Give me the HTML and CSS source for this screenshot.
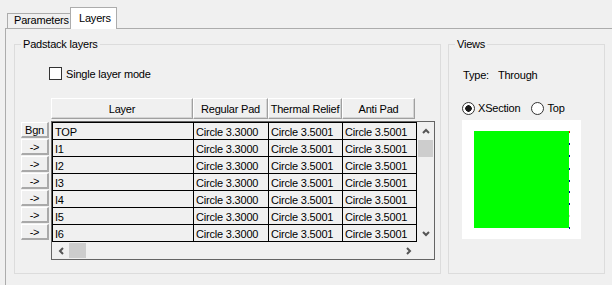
FILE: index.html
```html
<!DOCTYPE html>
<html lang="en">
<head>
    <meta charset="UTF-8">
    <title>Padstack - Layers</title>
    <link rel="stylesheet" href="styles.css">
</head>
<body>
    <div class="tabs">
        <div class="tab">Parameters</div>
        <div class="tab active">Layers</div>
    </div>

    <div class="panel">
        <fieldset class="group layers-group">
            <legend>Padstack layers</legend>

            <label class="check"><span class="check-box"></span>Single layer mode</label>

            <div class="table-area">
                <div class="row-buttons">
                    <div class="small-btn">Bgn</div>
                    <div class="small-btn">-&gt;</div>
                    <div class="small-btn">-&gt;</div>
                    <div class="small-btn">-&gt;</div>
                    <div class="small-btn">-&gt;</div>
                    <div class="small-btn">-&gt;</div>
                    <div class="small-btn">-&gt;</div>
                </div>

                <div class="grid">
                    <div class="grid-head">
                        <div class="head-cell col-layer">Layer</div>
                        <div class="head-cell col-regular">Regular Pad</div>
                        <div class="head-cell col-thermal">Thermal Relief</div>
                        <div class="head-cell col-anti">Anti Pad</div>
                    </div>

                    <div class="grid-body">
                        <div class="rows">
                            <div class="cell">TOP</div><div class="cell">Circle 3.3000</div><div class="cell">Circle 3.5001</div><div class="cell">Circle 3.5001</div>
                            <div class="cell">I1</div><div class="cell">Circle 3.3000</div><div class="cell">Circle 3.5001</div><div class="cell">Circle 3.5001</div>
                            <div class="cell">I2</div><div class="cell">Circle 3.3000</div><div class="cell">Circle 3.5001</div><div class="cell">Circle 3.5001</div>
                            <div class="cell">I3</div><div class="cell">Circle 3.3000</div><div class="cell">Circle 3.5001</div><div class="cell">Circle 3.5001</div>
                            <div class="cell">I4</div><div class="cell">Circle 3.3000</div><div class="cell">Circle 3.5001</div><div class="cell">Circle 3.5001</div>
                            <div class="cell">I5</div><div class="cell">Circle 3.3000</div><div class="cell">Circle 3.5001</div><div class="cell">Circle 3.5001</div>
                            <div class="cell">I6</div><div class="cell">Circle 3.3000</div><div class="cell">Circle 3.5001</div><div class="cell">Circle 3.5001</div>
                        </div>

                        <div class="vscroll">
                            <div class="arrow">
                                <svg width="8" height="6" viewBox="0 0 8 6"><polyline points="1,5 4,2 7,5" /></svg>
                            </div>
                            <div class="vthumb"></div>
                            <div class="arrow arrow-end">
                                <svg width="8" height="6" viewBox="0 0 8 6"><polyline points="1,1 4,4 7,1" /></svg>
                            </div>
                        </div>

                        <div class="hscroll">
                            <div class="arrow">
                                <svg width="6" height="8" viewBox="0 0 6 8"><polyline points="5,1 2,4 5,7" /></svg>
                            </div>
                            <div class="hthumb"></div>
                            <div class="arrow arrow-end">
                                <svg width="6" height="8" viewBox="0 0 6 8"><polyline points="1,1 4,4 1,7" /></svg>
                            </div>
                        </div>

                        <div class="corner"></div>
                    </div>
                </div>
            </div>
        </fieldset>

        <fieldset class="group views-group">
            <legend>Views</legend>

            <div class="type-line"><span class="type-label">Type:</span>Through</div>

            <div class="radio-line">
                <label class="radio"><span class="radio-dot checked"></span>XSection</label>
                <label class="radio"><span class="radio-dot"></span>Top</label>
            </div>

            <div class="preview">
                <svg width="119" height="119" viewBox="0 0 119 119">
                    <rect x="12" y="11" width="95" height="97" fill="#00ff00" />
                    <rect x="107" y="11" width="1" height="2" fill="#ff0000" />
                    <rect x="107" y="23" width="1" height="2" fill="#0000a8" />
                    <rect x="107" y="35" width="1" height="2" fill="#0000a8" />
                    <rect x="107" y="48" width="1" height="2" fill="#0000a8" />
                    <rect x="107" y="60" width="1" height="2" fill="#0000a8" />
                    <rect x="107" y="71" width="1" height="2" fill="#0000a8" />
                    <rect x="107" y="83" width="1" height="2" fill="#0000a8" />
                    <rect x="107" y="95" width="1" height="2" fill="#c8c8c8" />
                    <rect x="107" y="107" width="1" height="2" fill="#0000a8" />
                </svg>
            </div>
        </fieldset>
    </div>
</body>
</html>
```

FILE: styles.css
```css
* {
    box-sizing: border-box;
}
html, body {
    margin: 0;
    height: 100%;
    overflow: hidden;
}
body {
    font-family: "Liberation Sans", Arial, sans-serif;
    font-size: 11px;
    letter-spacing: -0.2px;
    color: #000000;
    background-color: #f0f0f0;
}

/* tab strip */
.tabs {
    display: flex;
    align-items: flex-end;
    padding: 7px 0 0 7px;
}
.tab {
    width: 64px;
    height: 15px;
    padding-left: 6px;
    line-height: 13px;
    white-space: nowrap;
    border: 1px solid #acacac;
    border-bottom: none;
}
.tab.active {
    position: relative;
    z-index: 1;
    width: 47px;
    height: 22px;
    margin-left: -1px;
    margin-bottom: -1px;
    padding-left: 8px;
    line-height: 20px;
    background-color: #ffffff;
}
.panel {
    display: flex;
    align-items: flex-start;
    gap: 7px;
    width: 620px;
    height: 270px;
    margin-left: 5px;
    padding: 9px 0 0 8px;
    border: 1px solid #acacac;
}

/* group boxes */
.group {
    margin: 0;
    padding: 0;
    min-width: 0;
    height: 236px;
    border: 1px solid #dcdcdc;
}
.group legend {
    margin-left: 6px;
    padding: 0 2px;
    line-height: 13px;
}
.layers-group {
    width: 427px;
}
.views-group {
    width: 157px;
}

.check {
    display: flex;
    align-items: center;
    height: 13px;
    margin: 16px 0 0 34px;
}
.check-box {
    width: 13px;
    height: 13px;
    margin-right: 4px;
    border: 1px solid #333333;
    background-color: #ffffff;
}

/* layer table */
.table-area {
    display: flex;
    margin-top: 18px;
}
.row-buttons {
    display: flex;
    flex-direction: column;
    gap: 1px;
    width: 28px;
    margin-left: 6px;
    padding-top: 24px;
}
.small-btn {
    height: 16px;
    line-height: 14px;
    text-align: center;
    border-top: 1px solid #ffffff;
    border-left: 1px solid #ffffff;
    border-right: 2px solid #a9a9a9;
    border-bottom: 2px solid #a9a9a9;
}
.grid {
    margin-left: 2px;
}
.grid-head {
    display: flex;
    height: 21px;
    margin-bottom: 2px;
}
.head-cell {
    line-height: 20px;
    text-align: center;
    white-space: nowrap;
    border-top: 1px solid #ffffff;
    border-left: 1px solid #ffffff;
    border-right: 1px solid #a0a0a0;
    border-bottom: 1px solid #a0a0a0;
    box-shadow: inset -1px -1px #d4d4d4;
}
.col-layer { width: 142px; }
.col-regular { width: 75px; }
.col-thermal { width: 74px; }
.col-anti { width: 73px; }

.grid-body {
    display: grid;
    grid-template-columns: 365px 17px;
    grid-template-rows: 120px 17px;
    width: 384px;
    border: 1px solid #646464;
}
.rows {
    display: grid;
    grid-template-columns: 141px 75px 74px 74px;
    border-right: 1px solid #000000;
    border-bottom: 1px solid #000000;
}
.cell {
    height: 17px;
    padding-left: 2px;
    line-height: 18px;
    white-space: nowrap;
    overflow: hidden;
    border-left: 1px solid #000000;
    border-top: 1px solid #000000;
}

/* scroll bars */
.vscroll {
    display: flex;
    flex-direction: column;
}
.hscroll {
    display: flex;
}
.arrow {
    display: flex;
    align-items: center;
    justify-content: center;
    width: 17px;
    height: 17px;
    flex-shrink: 0;
}
.arrow svg polyline {
    fill: none;
    stroke: #555555;
    stroke-width: 2;
}
.vscroll .arrow-end {
    margin-top: auto;
}
.hscroll .arrow-end {
    margin-left: auto;
}
.vthumb {
    height: 17px;
    margin: 1px 1px 0;
    background-color: #cdcdcd;
}
.hthumb {
    width: 17px;
    height: 15px;
    margin-top: 1px;
    background-color: #cdcdcd;
}

/* views */
.type-line {
    margin: 18px 0 0 14px;
    line-height: 13px;
}
.type-label {
    margin-right: 9px;
}
.radio-line {
    display: flex;
    align-items: center;
    gap: 11px;
    height: 14px;
    margin: 19px 0 0 13px;
}
.radio {
    display: flex;
    align-items: center;
    gap: 3px;
}
.radio-dot {
    width: 13px;
    height: 13px;
    border: 1px solid #333333;
    border-radius: 50%;
    background-color: #ffffff;
}
.radio-dot.checked {
    background: radial-gradient(circle, #1a1a1a 0 3px, #ffffff 3.5px);
}
.preview {
    width: 119px;
    height: 119px;
    margin: 5px 0 0 13px;
    background-color: #ffffff;
}
.preview svg {
    display: block;
}
```
